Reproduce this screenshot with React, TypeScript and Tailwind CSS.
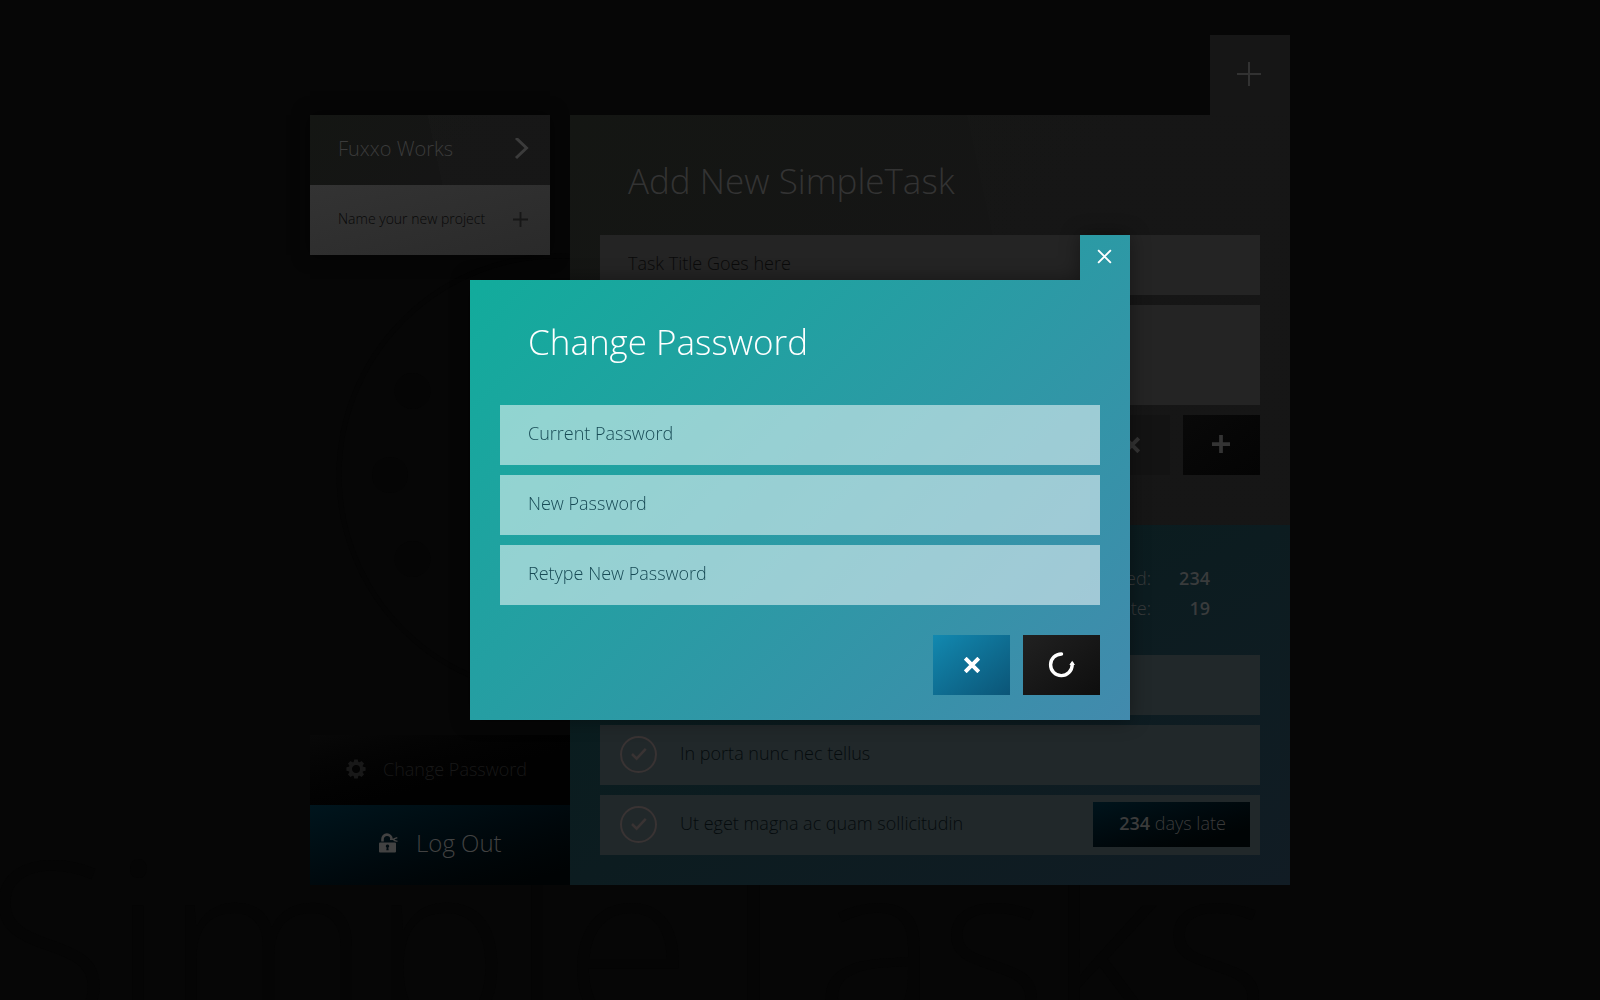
import React from "react";

function Plus({ size, stroke }: { size: number; stroke: number }) {
  return (
    <svg width={size} height={size} viewBox="0 0 24 24" fill="none" stroke="currentColor" strokeWidth={stroke} aria-hidden="true">
      <path d="M12 0v24M0 12h24" />
    </svg>
  );
}

function Cross({ size, stroke }: { size: number; stroke: number }) {
  return (
    <svg width={size} height={size} viewBox="0 0 16 16" fill="none" stroke="currentColor" strokeWidth={stroke} aria-hidden="true">
      <path d="M1.2 1.2l13.6 13.6M14.8 1.2L1.2 14.8" />
    </svg>
  );
}

function Gear() {
  return (
    <svg width="20" height="20" viewBox="0 0 20 20" aria-hidden="true">
      <circle cx="10" cy="10" r="5.7" fill="none" stroke="currentColor" strokeWidth="3.4" />
      {[0, 45, 90, 135, 180, 225, 270, 315].map((a) => (
        <path key={a} d="M7.6 3.6L8.2 0.4h3.6l0.6 3.200z" fill="currentColor" transform={`rotate(${a} 10 10)`} />
      ))}
    </svg>
  );
}

function OpenLock() {
  return (
    <svg width="19" height="20" viewBox="0 0 19 20" aria-hidden="true">
      <path
        fill="currentColor"
        fillRule="evenodd"
        d="M1 9.500h15a1 1 0 0 1 1 1v8a1 1 0 0 1-1 1H1a1 1 0 0 1-1-1v-8a1 1 0 0 1 1-1zM8.500 11.500a1.700 1.700 0 0 0-.8 3.200l-.4 2.600h2.400l-.4-2.600a1.700 1.700 0 0 0-.8-3.200z"
      />
      <path d="M3.500 8.500V6.200a4.500 4.500 0 0 1 9-.2" fill="none" stroke="currentColor" strokeWidth="2.600" />
      <path d="M18.300 4.600l-3.200 1.200v1.600l3.400.9" fill="none" stroke="currentColor" strokeWidth="1.300" />
      <path d="M11 6.400h4" fill="none" stroke="currentColor" strokeWidth="1.300" />
    </svg>
  );
}

function Reload() {
  return (
    <svg width="28" height="28" viewBox="0 0 28 28" aria-hidden="true">
      <path d="M13.500 3A10.800 10.800 0 1 0 24.200 14V13" fill="none" stroke="currentColor" strokeWidth="3.400" strokeLinecap="round" />
      <path d="M24.200 9.800l2.800 4.200h-5.600z" fill="currentColor" />
    </svg>
  );
}

function CheckCircle() {
  return (
    <svg width="38" height="38" viewBox="0 0 38 38" fill="none" stroke="currentColor" aria-hidden="true">
      <circle cx="18.500" cy="18.500" r="17.500" strokeWidth="2" />
      <path d="M12 18l4.600 4.600 9.200-9.800" strokeWidth="2.600" />
    </svg>
  );
}

function Dial() {
  return (
    <svg className="pointer-events-none absolute top-[138px] left-[26px] text-[#050505]" width="444" height="444" viewBox="0 0 444 444" fill="none" aria-hidden="true">
      <circle cx="222" cy="222" r="219" stroke="currentColor" strokeWidth="5" />
      {[-120, -90, -60].map((a) => (
        <circle key={a} cx="222" cy="54" r="18" fill="currentColor" transform={`rotate(${a} 222 222)`} />
      ))}
    </svg>
  );
}

function Sidebar() {
  return (
    <aside className="relative mt-20 flex w-[260px] shrink-0 flex-col justify-between">
      <Dial />
      <div className="relative mr-5 shadow-[0_0_16px_rgba(0,0,0,0.6)]">
        <a href="#project" className="flex h-[70px] items-center justify-between bg-[linear-gradient(78deg,transparent_52%,rgba(255,255,255,0.008)_52%),linear-gradient(135deg,#141613,#151515_60%)] pr-5 pb-[2px] pl-7 text-xl font-light text-[#3b3b3b]">
          Fuxxo Works
          <svg width="16" height="22" viewBox="0 0 16 22" fill="none" stroke="currentColor" strokeWidth="3" aria-hidden="true">
            <path d="M2 0l10.500 10L2 20" />
          </svg>
        </a>
        <form className="flex h-[70px] items-center bg-linear-to-br from-[#333333] to-[#2a2a2a] pr-[22px] pb-[2px] pl-7" onSubmit={(e) => e.preventDefault()}>
          <input aria-label="Name your new project" placeholder="Name your new project" className="min-w-0 flex-1 bg-transparent text-sm font-light outline-none placeholder:text-[#080808]" />
          <button type="submit" aria-label="Add project" className="text-[#171717]">
            <Plus size={15} stroke={3} />
          </button>
        </form>
      </div>
      <div className="relative">
        <button type="button" className="flex h-[70px] w-full items-center gap-[17px] bg-linear-to-br from-[#080808] to-[#010101] to-60% pb-[2px] pl-9 text-lg font-light text-[#181818]">
          <Gear />
          Change Password
        </button>
        <button type="button" className="flex h-20 w-full items-center gap-[18px] bg-linear-to-br from-[#00151d] to-[#000304] to-90% pb-1 pl-[69px] text-2xl font-light text-[#424242]">
          <OpenLock />
          Log Out
        </button>
      </div>
    </aside>
  );
}

function Task({ title, late }: { title: string; late?: number }) {
  return (
    <li className="flex h-[60px] items-center bg-[#21282a] pr-[10px] pb-px pl-5">
      <button type="button" aria-label="Complete task" className="text-[#393333]">
        <CheckCircle />
      </button>
      <span className="flex-1 pb-1 pl-[22px] text-lg font-light text-[#050b0d]">{title}</span>
      {late && (
        <span className="flex h-[45px] w-[157px] items-center justify-center bg-linear-to-br from-[#00141c] to-[#000405] to-80% pb-1 pl-[2px] text-lg font-light text-[#3b3b3b]">
          <span>
            <b className="font-semibold">{late}</b> days late
          </span>
        </span>
      )}
    </li>
  );
}

function MainPanel() {
  return (
    <main className="relative flex min-w-0 flex-1 flex-col">
      <button type="button" aria-label="New task" className="flex size-20 items-center justify-center self-end bg-[#161616] pr-[2px] pb-[2px] text-[#323232]">
        <Plus size={24} stroke={2} />
      </button>
      <section className="h-[410px] bg-[linear-gradient(78deg,transparent_60%,rgba(255,255,255,0.005)_60%),linear-gradient(135deg,#141613,#151515_50%)] px-[30px]">
        <h1 className="h-[120px] px-7 pt-[41px] text-[35px] leading-[50px] font-light text-[#333333]">Add New SimpleTask</h1>
        <form className="flex flex-col gap-[10px]" onSubmit={(e) => e.preventDefault()}>
          <input aria-label="Task title" placeholder="Task Title Goes here" className="h-[60px] bg-[#242424] px-7 pb-1 text-lg font-light outline-none placeholder:text-[#0a0a0a]" />
          <textarea aria-label="Task description" className="h-[100px] resize-none bg-[#242424] px-7 py-4 text-lg font-light outline-none" />
          <div className="flex justify-end gap-[13px] text-[#343434]">
            <button type="reset" aria-label="Clear" className="flex h-[60px] w-[77px] items-center justify-center bg-[#131313]">
              <Cross size={16} stroke={4} />
            </button>
            <button type="submit" aria-label="Add task" className="flex h-[60px] w-[77px] items-center justify-center bg-linear-to-br from-[#090909] to-[#040404] pr-[2px] pb-[2px]">
              <Plus size={18} stroke={5} />
            </button>
          </div>
        </form>
      </section>
      <section className="bg-linear-to-br from-[#071d1d] via-[#0c1c20] to-[#111c24] px-[30px] pb-[30px]">
        <dl className="grid h-[130px] grid-cols-[1fr_59px] content-start pt-[38px] pr-[50px] text-right text-lg leading-[30px] font-light text-[#393b3c]">
          <dt>Completed:</dt>
          <dd className="font-semibold">234</dd>
          <dt>Late:</dt>
          <dd className="font-semibold">19</dd>
        </dl>
        <ul className="flex flex-col gap-[10px]">
          <Task title="" />
          <Task title="In porta nunc nec tellus" />
          <Task title="Ut eget magna ac quam sollicitudin" late={234} />
        </ul>
      </section>
    </main>
  );
}

function ChangePassword() {
  const fields = ["Current Password", "New Password", "Retype New Password"];
  return (
    <div className="absolute inset-0 flex items-start justify-center pt-[235px]">
      <div className="w-full max-w-[660px] drop-shadow-[0_0_10px_rgba(0,0,0,0.4)]">
        <div role="dialog" aria-labelledby="dialog-title" className="flex flex-col bg-linear-[135deg] from-[#10ad9b] to-[#428aad] [clip-path:polygon(0_45px,calc(100%_-_50px)_45px,calc(100%_-_50px)_0,100%_0,100%_100%,0_100%)]">
          <button type="button" aria-label="Close" className="flex h-[45px] w-[50px] items-center justify-center self-end pr-px pb-[2px] text-white">
            <Cross size={15} stroke={2} />
          </button>
          <form className="px-[30px] pb-[25px]" onSubmit={(e) => e.preventDefault()}>
            <h2 id="dialog-title" className="h-[125px] px-7 pt-[37px] text-[35px] leading-[50px] font-light text-white">
              Change Password
            </h2>
            <div className="flex flex-col gap-[10px]">
              {fields.map((f) => (
                <input key={f} aria-label={f} type="password" placeholder={f} className="h-[60px] bg-white/52 px-7 pb-1 text-lg font-light outline-none placeholder:text-[#174a55]" />
              ))}
            </div>
            <div className="flex justify-end gap-[13px] pt-[30px] text-white">
              <button type="reset" aria-label="Cancel" className="flex h-[60px] w-[77px] items-center justify-center bg-linear-to-br from-[#1289b0] to-[#0b5577]">
                <Cross size={16} stroke={4} />
              </button>
              <button type="submit" aria-label="Update password" className="flex h-[60px] w-[77px] items-center justify-center bg-linear-to-br from-[#212121] to-[#0e0e0e]">
                <Reload />
              </button>
            </div>
          </form>
        </div>
      </div>
    </div>
  );
}

export default function App() {
  return (
    <div className="relative min-h-screen overflow-hidden bg-[#060606] pt-[35px] pb-[115px] font-['Open_Sans',sans-serif]">
      <div aria-hidden="true" className="pointer-events-none absolute inset-x-0 top-[780px] -ml-4 text-[234px] leading-[320px] font-light whitespace-nowrap text-[#050505]">
        SimpleTasks
      </div>
      <div className="relative mx-auto flex max-w-[980px]">
        <Sidebar />
        <MainPanel />
      </div>
      <ChangePassword />
    </div>
  );
}
